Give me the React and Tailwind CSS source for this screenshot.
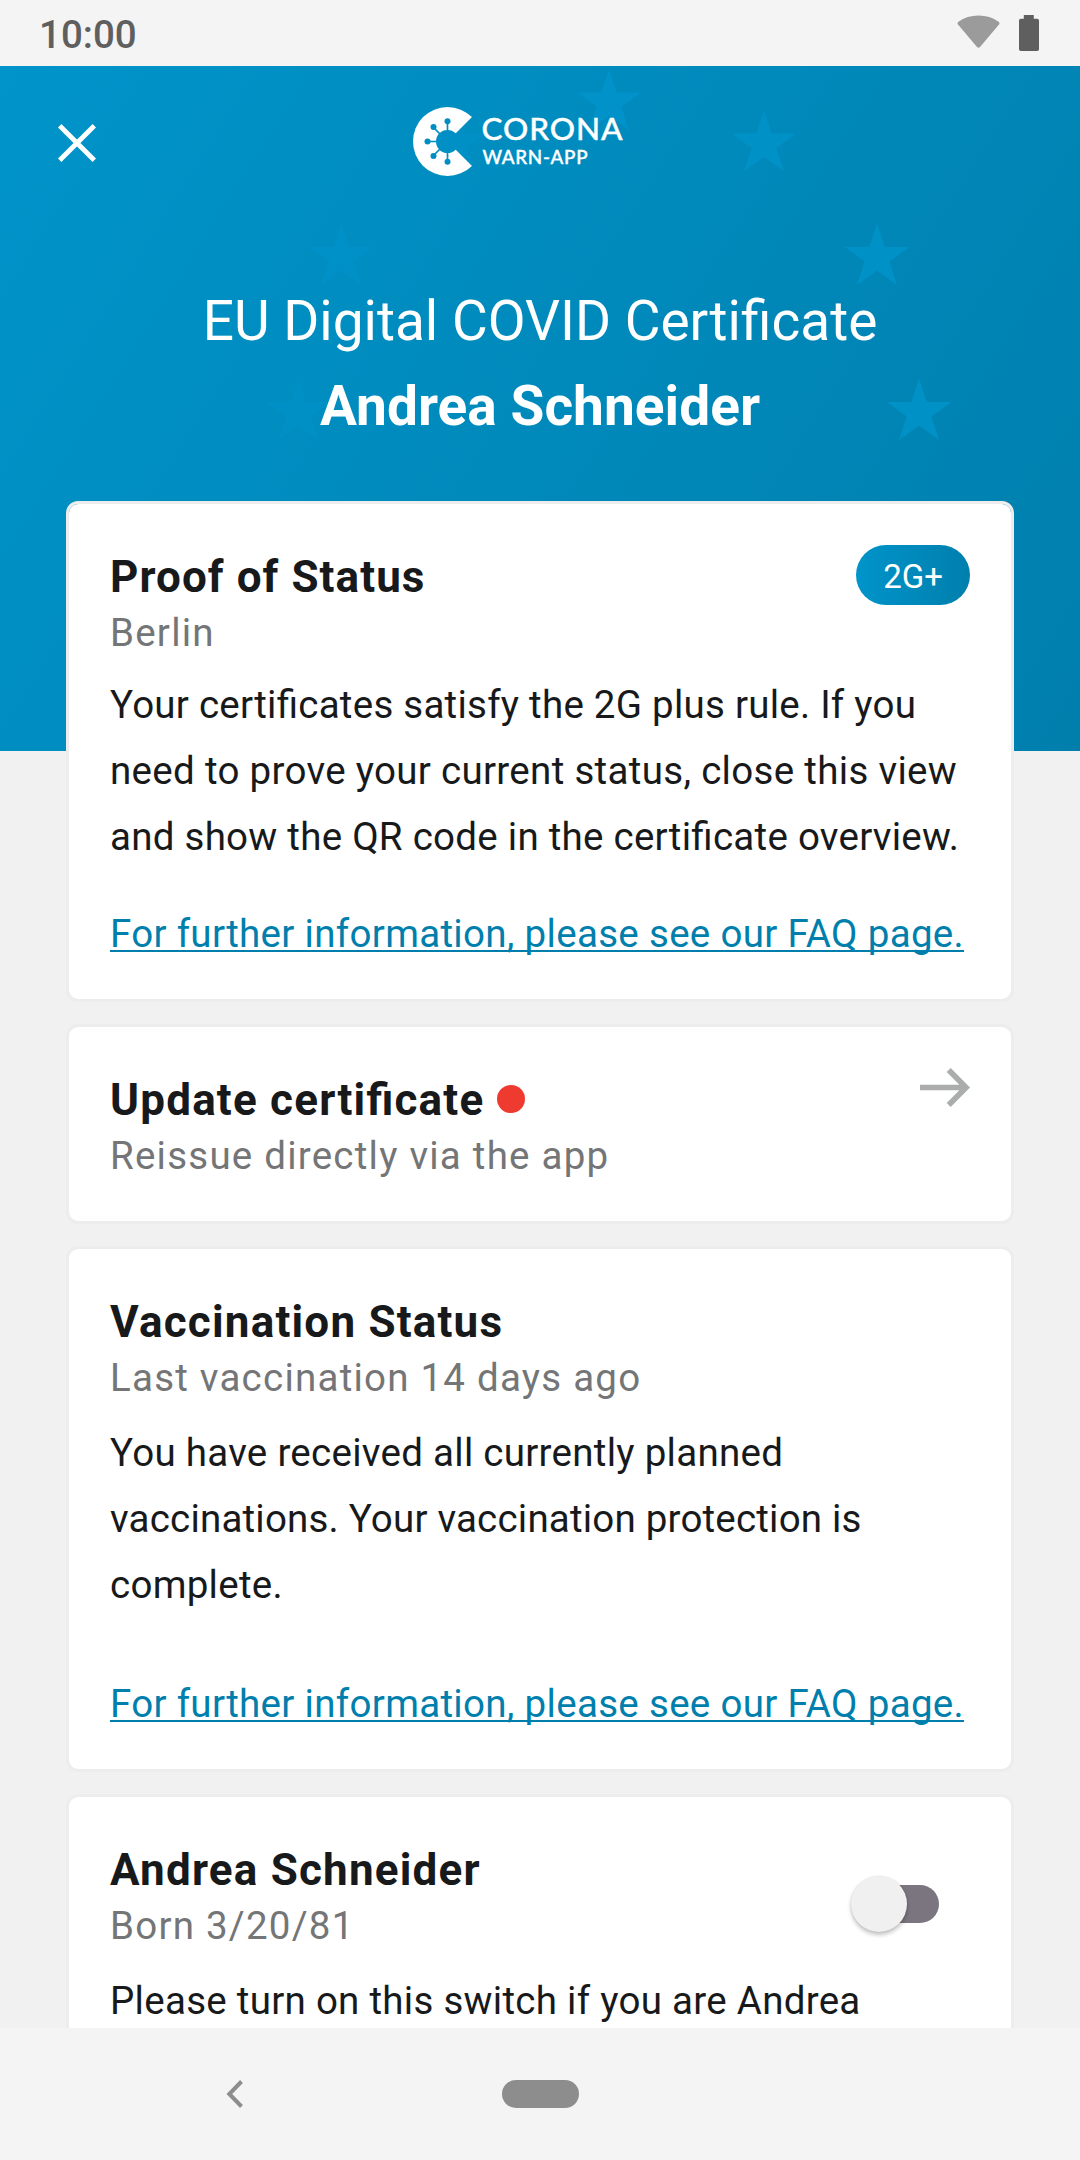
import React from "react";

// Stars sit on a ring of twelve; only the ones around the title are visible.
const STARS = [
  [609, 37, 0.9], [764, 78, 0.9], [877, 191.5, 0.9], [919, 346.5, 0.9],
  [454, 78, 0.65], [341.3, 191.5, 0.75], [298.5, 346.5, 0.7],
];
const STAR_POINTS =
  "0,-34 7.64,-10.51 32.34,-10.51 12.35,4.01 19.98,27.51 0,13 -19.98,27.51 -12.35,4.01 -32.34,-10.51 -7.64,-10.51";

function StatusBar() {
  return (
    <div className="flex h-[66px] shrink-0 items-start justify-between bg-[#f4f4f4] pl-[39px] pr-[41px]">
      <span className="text-[38.5px] leading-[70px] font-medium text-[#5f5f5f]">10:00</span>
      <div className="flex items-start gap-[19px] pt-[15px]">
        <svg className="h-[33px] w-[43px]" viewBox="0 0 43 33" fill="#9b9b9b">
          <path d="M1 9.5Q-.2 7.9 1.4 6.8 10 .5 21.5 .5 33 .5 41.6 6.8 43.2 7.9 42 9.5L23 32Q21.5 33.6 20 32Z" />
        </svg>
        <svg className="h-[36px] w-[20px]" viewBox="0 0 20 36" fill="#5f5f5f">
          <path d="M4.8 0H14.8V3.8H18.2Q20 3.8 20 5.600V34.2Q20 36 18.2 36H1.8Q0 36 0 34.2V5.600Q0 3.8 1.8 3.8H4.8Z" />
        </svg>
      </div>
    </div>
  );
}

function Logo() {
  return (
    <svg className="h-[70px] w-[212px]" viewBox="0 0 212 70" fill="#fff">
      <defs>
        <mask id="logo-cut">
          <rect width="70" height="70" fill="#fff" />
          <g fill="#000" stroke="#000">
            <path stroke="none" d="M34.5 34.5L70-1V70Z" />
            <circle stroke="none" cx="34.5" cy="34.5" r="11.500" />
            <path strokeWidth="1.7" fill="none" d="M34.5 14V55M14 34.5H34M20.5 20.5L34.5 34.5L20.5 48.5" />
            <g stroke="none">
              <circle cx="34.5" cy="14.3" r="3" />
              <circle cx="34.5" cy="54.7" r="3" />
              <circle cx="14.5" cy="34.5" r="3" />
              <circle cx="20.5" cy="20" r="3" />
              <circle cx="20.5" cy="49" r="3" />
            </g>
          </g>
        </mask>
      </defs>
      <circle cx="34.5" cy="34.5" r="34.5" mask="url(#logo-cut)" />
      <g stroke="#fff" strokeWidth="0.4">
        <text x="68.5" y="33.3" textLength="141" className="font-['Lato'] text-[31.5px] font-medium">CORONA</text>
        <text x="69.5" y="56.8" textLength="105" className="font-['Lato'] text-[18.8px] font-medium">WARN-APP</text>
      </g>
    </svg>
  );
}

function Header() {
  return (
    <header className="relative h-[685px] bg-[linear-gradient(122.4deg,#0094ca,#007fad)] text-white">
      <svg className="absolute inset-0 h-full w-full" viewBox="0 0 1080 685" fill="#0092c9">
        {STARS.map(([x, y, opacity]) => (
          <polygon key={x} points={STAR_POINTS} fillOpacity={opacity} transform={`translate(${x} ${y})`} />
        ))}
      </svg>
      <div className="relative flex h-[154px] items-center pl-[58px]">
        <svg className="size-[38px]" viewBox="0 0 38 38" fill="none" stroke="#fff" strokeWidth="4.8">
          <path d="M1.7 1.7L36.3 36.3M36.3 1.7L1.7 36.3" />
        </svg>
        <div className="ml-[317px] -mt-[3px] h-[70px]">
          <Logo />
        </div>
      </div>
      <div className="relative flex flex-col gap-px pt-[59px] text-center text-[55px] leading-[84px]">
        <h1>EU Digital COVID Certificate</h1>
        <h2 className="font-bold tracking-[0.04px]">Andrea Schneider</h2>
      </div>
    </header>
  );
}

function Card({ title, titleTracking = "tracking-[1.2px]", subtitle, dot, action, className = "", children }) {
  return (
    <section className={`w-full shrink-0 rounded-xl border-3 border-[#ededed] bg-white bg-clip-padding px-[41px] pt-[41px] ${className}`}>
      <div className="flex h-[115px] items-start justify-between">
        <div className="pt-1">
          <div className="flex items-center gap-[13px]">
            <h3 className={`text-[44px] leading-[56px] font-bold ${titleTracking}`}>{title}</h3>
            {dot && <span className="-mt-[2px] size-[28px] rounded-full bg-[#ef3a30]" />}
          </div>
          <p className="text-[38.5px] leading-[55px] tracking-[1.23px] text-[#747577]">{subtitle}</p>
        </div>
        {action}
      </div>
      {children}
    </section>
  );
}

function FaqLink({ className }) {
  return (
    <a className={`block whitespace-nowrap leading-[66px] tracking-[0.31px] text-[#007fad] underline decoration-2 underline-offset-3 [text-decoration-skip-ink:none] ${className}`}>
      For further information, please see our FAQ page.
    </a>
  );
}

function Switch() {
  return (
    <div className="relative mt-[38px] mr-[31px] h-14 w-[88px]">
      <div className="absolute top-[9px] right-0 h-[38px] w-[76px] rounded-full bg-[#7a757f]" />
      <div className="absolute top-0 left-0 size-14 rounded-full bg-[#f0f0f0] shadow-[0_3px_4px_rgba(0,0,0,0.24),0_0_2px_rgba(0,0,0,0.1)]" />
    </div>
  );
}

export default function App() {
  return (
    <div className="flex h-[2160px] w-[1080px] flex-col overflow-hidden bg-[#f1f1f1] font-['Roboto',sans-serif] text-[38.5px] text-[#17191a] [font-feature-settings:'liga'_1]">
      <StatusBar />
      <main className="h-[1962px] shrink-0 overflow-hidden">
        <Header />
        <div className="relative -mt-[250px] flex flex-col gap-[22px] px-[66px]">
          <Card
            title="Proof of Status"
            titleTracking="tracking-[1.08px]"
            subtitle="Berlin"
            className="h-[501px]"
            action={
              <span className="h-[60px] w-[114px] rounded-full bg-linear-to-r from-[#0094ca] to-[#007fad] text-center text-[33px] leading-[63px] text-white">
                2G+
              </span>
            }
          >
            <p className="mt-[11.5px] leading-[66px] whitespace-nowrap">
              <span className="block tracking-[0.25px]">Your certificates satisfy the 2G plus rule. If you</span>
              <span className="block tracking-[0.31px]">need to prove your current status, close this view</span>
              <span className="block tracking-[0.26px]">and show the QR code in the certificate overview.</span>
            </p>
            <FaqLink className="mt-[31px]" />
          </Card>
          <Card
            title="Update certificate"
            subtitle="Reissue directly via the app"
            dot
            className="h-[200px]"
            action={
              <svg className="h-[39px] w-[50px]" viewBox="0 0 50 39" fill="#abadad">
                <path d="M0 16.7H39.3L26.7 4 30.7 0 50 19.5 30.7 39 26.7 35 39.3 22.3H0Z" />
              </svg>
            }
          />
          <Card title="Vaccination Status" subtitle="Last vaccination 14 days ago" className="h-[526px]">
            <p className="mt-[14.5px] leading-[66px] whitespace-nowrap">
              <span className="block tracking-[0.28px]">You have received all currently planned</span>
              <span className="block tracking-[0.2px]">vaccinations. Your vaccination protection is</span>
              <span className="block tracking-[0.28px]">complete.</span>
            </p>
            <FaqLink className="mt-[53px]" />
          </Card>
          <Card title="Andrea Schneider" subtitle="Born 3/20/81" className="h-[300px]" action={<Switch />}>
            <p className="mt-[14.5px] leading-[66px] tracking-[0.28px] whitespace-nowrap">
              Please turn on this switch if you are Andrea
            </p>
          </Card>
        </div>
      </main>
      <nav className="flex h-[132px] shrink-0 items-center bg-[#f4f4f4] pl-[226px]">
        <svg className="h-7 w-[18px]" viewBox="0 0 18 28" fill="none" stroke="#8d8d8d" strokeWidth="4">
          <path d="M15.5 1.5L3.3 14L15.5 26.5" />
        </svg>
        <div className="ml-[258px] h-7 w-[77px] rounded-full bg-[#8d8d8d]" />
      </nav>
    </div>
  );
}
